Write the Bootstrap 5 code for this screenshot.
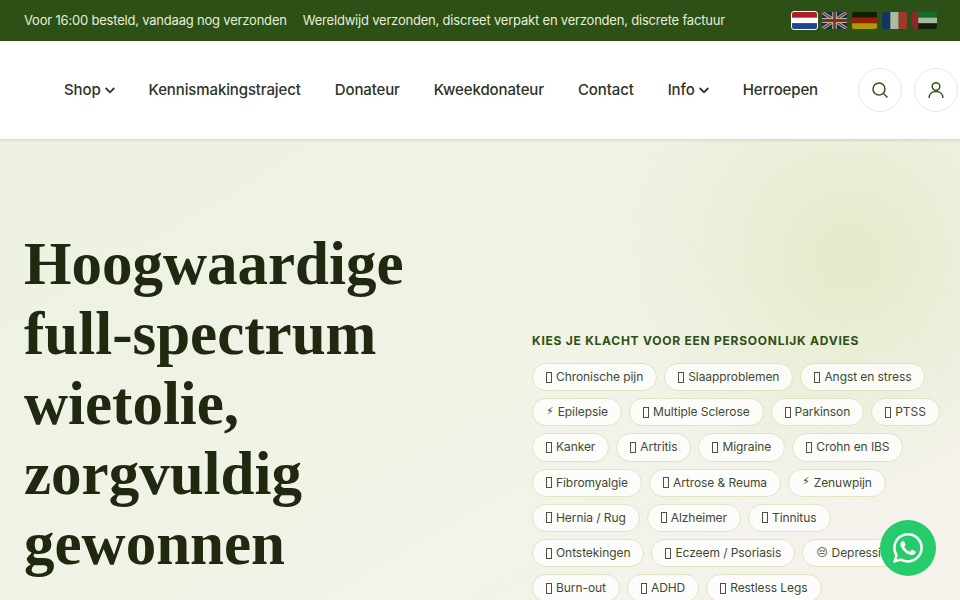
<!DOCTYPE html>
<html lang="nl">
<head>
  <meta charset="UTF-8">
  <title>Wietolie</title>
  <link href="https://cdn.jsdelivr.net/npm/bootstrap@5.3.0/dist/css/bootstrap.min.css" rel="stylesheet">
  <style>
    html, body { height: 600px; overflow: hidden; }
    body { font-family: Inter, "Noto Sans", sans-serif; color: #2b3320; }
    .promo-bar { background: #2d5016; height: 41px; padding: 0 23px 0 24px; color: #e6efd6; font-size: 13px; letter-spacing: -.2px; }
    .promo-msgs { gap: 16px; }
    .flag-row { gap: 5px; }
    .flag-btn { width: 25px; height: 17px; border-radius: 2px; overflow: hidden; opacity: .6; display: block; }
    .flag-btn.active { opacity: 1; outline: 1.5px solid #fff; }
    .flag-btn svg { display: block; width: 100%; height: 100%; }
    .main-nav { height: 98px; background: #fff; padding: 0 2px 0 64px; box-shadow: 0 1px 3px rgba(0,0,0,.14); position: relative; }
    .main-nav a { color: #2e3229; font-size: 15px; font-weight: 450; text-decoration: none; letter-spacing: -.12px; }
    .menu-links { gap: 34px; }
    .round-btn { width: 44px; height: 44px; border: 1px solid #e8e9e2; border-radius: 50%; background: #fff; padding: 0; color: #3a5220; }
    .hero-area { height: 461px; padding: 0 24px; overflow: hidden;
      background:
        radial-gradient(circle at 850px 120px, rgba(225,234,198,.9), rgba(225,234,198,.45) 110px, rgba(225,234,198,0) 240px),
        linear-gradient(150deg, #edf2e1 0%, #f0f3e6 50%, #f5f2ec 85%); }
    .hero-title { font-family: "Liberation Serif", serif; font-weight: 700; font-size: 61px; line-height: 70px; color: #20280f; margin: 90px 0 0; width: 480px; }
    .hero-right { width: 410px; margin: 193px 0 0 28px; }
    .klacht-label { font-size: 12px; font-weight: 700; letter-spacing: .75px; color: #2d5016; margin-bottom: 13px; }
    .klacht-chips { gap: 7px; }
    .klacht-chip { height: 28.2px; padding: 0 13px; gap: 4px; border: 1px solid #dfe6bf; border-radius: 15px; background: rgba(255,255,255,.75); color: #3f4a36; font-size: 12px; letter-spacing: -.07px; white-space: nowrap; }
    .glyph-box { width: 6px; height: 11px; border: 1px solid #4a5340; }
    .glyph-mono { font-family: "DejaVu Sans", sans-serif; font-size: 11px; }
    .wa-float { position: fixed; left: 880px; top: 520px; width: 56px; height: 56px; border-radius: 50%; background: #26cb6c; color: #fff; }
  </style>
</head>
<body>
  <div class="promo-bar d-flex align-items-center justify-content-between">
    <div class="promo-msgs d-flex">
      <span>Voor 16:00 besteld, vandaag nog verzonden</span>
      <span>Wereldwijd verzonden, discreet verpakt en verzonden, discrete factuur</span>
    </div>
    <div class="flag-row d-flex">
      <span class="flag-btn active"><svg viewBox="0 0 3 3" preserveAspectRatio="none"><rect width="3" height="1" fill="#ae1c28"/><rect y="1" width="3" height="1" fill="#fff"/><rect y="2" width="3" height="1" fill="#21468b"/></svg></span>
      <span class="flag-btn"><svg viewBox="0 0 60 36" preserveAspectRatio="none"><rect width="60" height="36" fill="#012169"/><path d="M0 0L60 36M60 0L0 36" stroke="#fff" stroke-width="7"/><path d="M0 0L60 36M60 0L0 36" stroke="#c8102e" stroke-width="3"/><path d="M30 0V36M0 18H60" stroke="#fff" stroke-width="11"/><path d="M30 0V36M0 18H60" stroke="#c8102e" stroke-width="6"/></svg></span>
      <span class="flag-btn"><svg viewBox="0 0 3 3" preserveAspectRatio="none"><rect width="3" height="1" fill="#000"/><rect y="1" width="3" height="1" fill="#d00"/><rect y="2" width="3" height="1" fill="#ffce00"/></svg></span>
      <span class="flag-btn"><svg viewBox="0 0 3 3" preserveAspectRatio="none"><rect width="1" height="3" fill="#002395"/><rect x="1" width="1" height="3" fill="#fff"/><rect x="2" width="1" height="3" fill="#ed2939"/></svg></span>
      <span class="flag-btn"><svg viewBox="0 0 12 3" preserveAspectRatio="none"><rect width="12" height="1" fill="#00843d"/><rect y="1" width="12" height="1" fill="#fff"/><rect y="2" width="12" height="1" fill="#000"/><rect width="3" height="3" fill="#c8102e"/></svg></span>
    </div>
  </div>

  <nav class="main-nav d-flex align-items-center justify-content-between">
    <div class="menu-links d-flex align-items-center">
      <a href="#" class="d-flex align-items-center gap-1">Shop <svg width="10" height="7" viewBox="0 0 10 7" fill="none" stroke="currentColor" stroke-width="1.8"><path d="M.7 1L5 5.3 9.3 1"/></svg></a>
      <a href="#">Kennismakingstraject</a>
      <a href="#">Donateur</a>
      <a href="#">Kweekdonateur</a>
      <a href="#">Contact</a>
      <a href="#" class="d-flex align-items-center gap-1">Info <svg width="10" height="7" viewBox="0 0 10 7" fill="none" stroke="currentColor" stroke-width="1.8"><path d="M.7 1L5 5.3 9.3 1"/></svg></a>
      <a href="#">Herroepen</a>
    </div>
    <div class="d-flex gap-2 ms-auto">
      <button class="round-btn d-flex align-items-center justify-content-center me-1"><svg width="18" height="18" viewBox="0 0 18 18" fill="none" stroke="currentColor" stroke-width="1.5"><circle cx="8" cy="8" r="6"/><path d="M12.5 12.5L16.5 16.5"/></svg></button>
      <button class="round-btn d-flex align-items-center justify-content-center"><svg width="18" height="18" viewBox="0 0 18 18" fill="none" stroke="currentColor" stroke-width="1.5"><circle cx="9" cy="5.5" r="3.8"/><path d="M2 17c0-4 3-6.5 7-6.5s7 2.5 7 6.5"/></svg></button>
    </div>
  </nav>

  <section class="hero-area d-flex align-items-start">
    <h1 class="hero-title flex-shrink-0">Hoogwaardige full-spectrum wietolie, zorgvuldig gewonnen</h1>
    <div class="hero-right flex-shrink-0">
      <div class="klacht-label text-uppercase">Kies je klacht voor een persoonlijk advies</div>
      <div class="klacht-chips d-flex flex-wrap">
        <span class="klacht-chip d-flex align-items-center"><i class="glyph-box"></i>Chronische pijn</span>
        <span class="klacht-chip d-flex align-items-center"><i class="glyph-box"></i>Slaapproblemen</span>
        <span class="klacht-chip d-flex align-items-center"><i class="glyph-box"></i>Angst en stress</span>
        <span class="klacht-chip d-flex align-items-center"><span class="glyph-mono">⚡&#xFE0E;</span>Epilepsie</span>
        <span class="klacht-chip d-flex align-items-center"><i class="glyph-box"></i>Multiple Sclerose</span>
        <span class="klacht-chip d-flex align-items-center"><i class="glyph-box"></i>Parkinson</span>
        <span class="klacht-chip d-flex align-items-center"><i class="glyph-box"></i>PTSS</span>
        <span class="klacht-chip d-flex align-items-center"><i class="glyph-box"></i>Kanker</span>
        <span class="klacht-chip d-flex align-items-center"><i class="glyph-box"></i>Artritis</span>
        <span class="klacht-chip d-flex align-items-center"><i class="glyph-box"></i>Migraine</span>
        <span class="klacht-chip d-flex align-items-center"><i class="glyph-box"></i>Crohn en IBS</span>
        <span class="klacht-chip d-flex align-items-center"><i class="glyph-box"></i>Fibromyalgie</span>
        <span class="klacht-chip d-flex align-items-center"><i class="glyph-box"></i>Artrose &amp; Reuma</span>
        <span class="klacht-chip d-flex align-items-center"><span class="glyph-mono">⚡&#xFE0E;</span>Zenuwpijn</span>
        <span class="klacht-chip d-flex align-items-center"><i class="glyph-box"></i>Hernia / Rug</span>
        <span class="klacht-chip d-flex align-items-center"><i class="glyph-box"></i>Alzheimer</span>
        <span class="klacht-chip d-flex align-items-center"><i class="glyph-box"></i>Tinnitus</span>
        <span class="klacht-chip d-flex align-items-center"><i class="glyph-box"></i>Ontstekingen</span>
        <span class="klacht-chip d-flex align-items-center"><i class="glyph-box"></i>Eczeem / Psoriasis</span>
        <span class="klacht-chip d-flex align-items-center"><span class="glyph-mono">😔&#xFE0E;</span>Depressie</span>
        <span class="klacht-chip d-flex align-items-center"><i class="glyph-box"></i>Burn-out</span>
        <span class="klacht-chip d-flex align-items-center"><i class="glyph-box"></i>ADHD</span>
        <span class="klacht-chip d-flex align-items-center"><i class="glyph-box"></i>Restless Legs</span>
      </div>
    </div>
  </section>

  <a href="#" class="wa-float d-flex align-items-center justify-content-center">
    <svg width="30" height="30" viewBox="0 0 16 16" fill="currentColor"><path d="M13.601 2.326A7.854 7.854 0 0 0 7.994 0C3.627 0 .068 3.558.064 7.926c0 1.399.366 2.76 1.057 3.965L0 16l4.204-1.102a7.933 7.933 0 0 0 3.79.965h.004c4.368 0 7.926-3.558 7.93-7.93A7.898 7.898 0 0 0 13.6 2.326zM7.994 14.521a6.573 6.573 0 0 1-3.356-.92l-.24-.144-2.494.654.666-2.433-.156-.251a6.56 6.56 0 0 1-1.007-3.505c0-3.626 2.957-6.584 6.591-6.584a6.56 6.56 0 0 1 4.66 1.931 6.557 6.557 0 0 1 1.928 4.66c-.004 3.639-2.961 6.592-6.592 6.592zm3.615-4.934c-.197-.099-1.17-.578-1.353-.646-.182-.065-.315-.099-.445.099-.133.197-.513.646-.627.775-.114.133-.232.148-.43.05-.197-.1-.836-.308-1.592-.985-.59-.525-.985-1.175-1.103-1.372-.114-.198-.011-.304.088-.403.087-.088.197-.232.296-.346.1-.114.133-.198.198-.33.065-.134.034-.248-.015-.347-.05-.099-.445-1.076-.612-1.47-.16-.389-.323-.335-.445-.34-.114-.007-.247-.007-.38-.007a.729.729 0 0 0-.529.247c-.182.198-.691.677-.691 1.654 0 .977.71 1.916.81 2.049.098.133 1.394 2.132 3.383 2.992.47.205.84.326 1.129.418.475.152.904.129 1.246.08.38-.058 1.171-.48 1.338-.943.164-.464.164-.86.114-.943-.049-.084-.182-.133-.38-.232z"/></svg>
  </a>
  <script src="https://cdn.jsdelivr.net/npm/bootstrap@5.3.0/dist/js/bootstrap.bundle.min.js"></script>
</body>
</html>
